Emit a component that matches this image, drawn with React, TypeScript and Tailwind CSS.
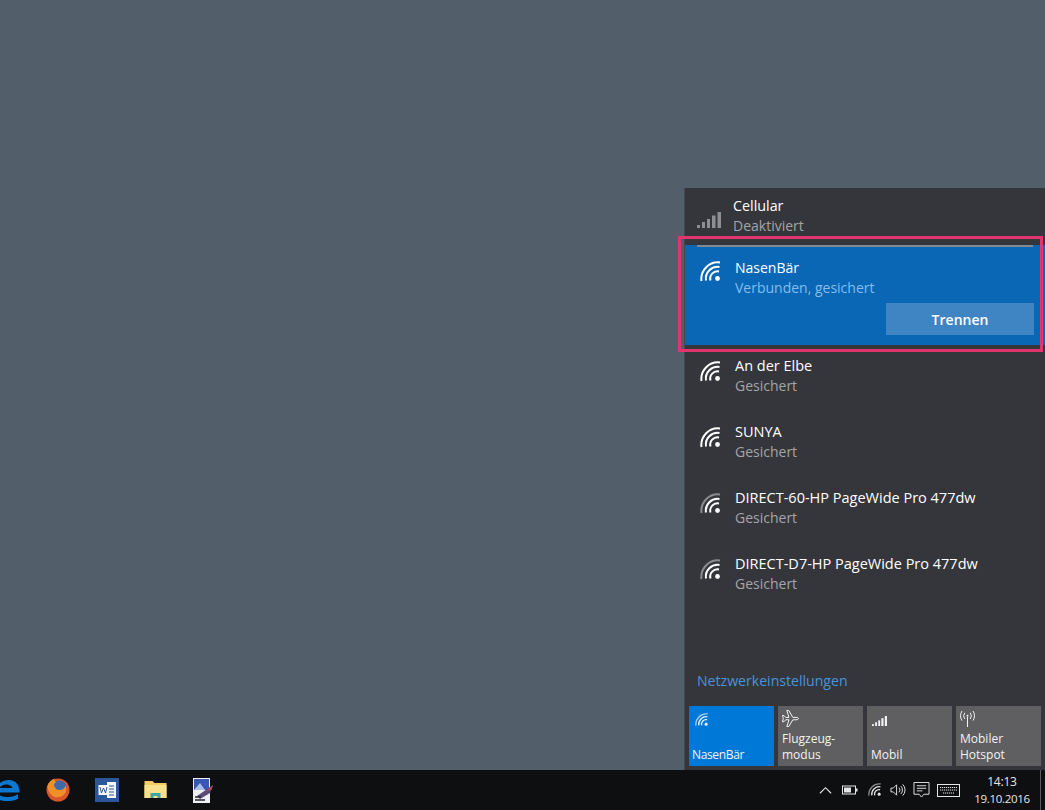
import React from "react";

const font = "font-['Open_Sans','Noto_Sans',sans-serif]";

// arcs share their centre with the dot, bottom right of the drawing
const WifiIcon = ({
  color = "#ffffff",
  outer,
  className = "w-[22px] h-[22px]",
}: {
  color?: string;
  outer?: string;
  className?: string;
}) => (
  <svg viewBox="0 0 22 22" fill="none" className={className}>
    <circle cx="17.5" cy="17.5" r="2.4" fill={color} />
    <path d="M10.5 19.5A7.2 7.2 0 0 1 19 10.5" stroke={color} strokeWidth="2" />
    <path d="M6 19.5A11.8 11.8 0 0 1 19.5 6" stroke={color} strokeWidth="2" />
    <path d="M1.5 20A16.5 16.5 0 0 1 20 1.5" stroke={outer ?? color} strokeWidth="2" />
  </svg>
);

const CellBars = ({ className, color }: { className: string; color: string }) => (
  <svg viewBox="0 0 24 16" className={className} fill={color}>
    <rect x="0" y="13" width="3" height="3" />
    <rect x="5" y="10" width="3" height="6" />
    <rect x="10" y="7" width="3" height="9" />
    <rect x="15" y="3.5" width="3.5" height="12.5" />
    <rect x="20.5" y="0" width="3.5" height="16" />
  </svg>
);

const PlaneIcon = () => (
  <svg viewBox="1 0 18 18" fill="none" stroke="#f2f2f2" strokeWidth="1" className="w-[18px] h-[18px]">
    <path d="M1.5 6.5l1.5 0 1.8 2 3.2-.1L5.8 1.5h2l4 6.900 3.200 0c1.600 0 2.500.6 2.500 1.200s-.9 1.200-2.500 1.200l-3.200 0-4 6.700h-2l2.200-6.700-3.200-.1-1.800 2-1.500 0 .8-3.100z" />
  </svg>
);

const HotspotIcon = () => (
  <svg viewBox="2 1 14 16" fill="none" stroke="#f2f2f2" strokeWidth="1" className="w-[15px] h-[16px] mt-[2px]">
    <path d="M9 7v10" />
    <circle cx="9" cy="5.8" r="1" fill="#f2f2f2" stroke="none" />
    <path d="M6.3 2.800a5 5 0 0 0 0 6.200M11.700 2.800a5 5 0 0 1 0 6.200" />
    <path d="M3.500 1a9 9 0 0 0 0 9.600M14.500 1a9 9 0 0 1 0 9.600" />
  </svg>
);

const networks = [
  { name: "An der Elbe", outer: undefined },
  { name: "SUNYA", outer: undefined },
  { name: "DIRECT-60-HP PageWide Pro 477dw", outer: "#8b8c8f" },
  { name: "DIRECT-D7-HP PageWide Pro 477dw", outer: "#8b8c8f" },
];

const NetworkRow = ({ name, outer }: { name: string; outer?: string }) => (
  <div className="h-[66px] flex pl-[15px] pt-[11px]">
    <div className="pt-[5px]">
      <WifiIcon outer={outer} />
    </div>
    <div className="ml-[13px] leading-[20px]">
      <div className="text-white text-[14.5px]">{name}</div>
      <div className="text-[#a4a5a8] text-[14px]">Gesichert</div>
    </div>
  </div>
);

const Tile = ({
  icon,
  active,
  children,
}: {
  icon: React.ReactNode;
  active?: boolean;
  children: React.ReactNode;
}) => (
  <div
    className={`h-[60px] flex flex-col justify-between pt-[3px] pb-[3px] text-[12px] leading-[16px] text-[#f2f2f2] ${
      active ? "bg-[#0078d7] pl-[3px]" : "bg-[#5f5f61] pl-[4px]"
    }`}
  >
    <div className="h-[18px]">{icon}</div>
    <div>{children}</div>
  </div>
);

const Firefox = () => (
  <svg viewBox="0 0 24 24" className="w-[24px] h-[24px]">
    <circle cx="12" cy="12" r="11.5" fill="#d9562a" />
    <circle cx="13.500" cy="9.500" r="7" fill="#3f6aa8" />
    <path d="M1.500 8c1-3.500 3.500-6 7-7.500-.7 1.800 0 3 2 3.500-1.500.7-2.500 1.700-2.500 3 .5 3 3 5.500 6.500 5 2.500-.3 4.500-2 5-4.500 1.500 3 1 7-2 9.500-3 2.700-8 3-11 .7C3 15 1.500 11.500 1.500 8z" fill="#f0902a" />
  </svg>
);

const WordIcon = () => (
  <svg viewBox="0 0 24 24" className="w-[24px] h-[24px]">
    <rect width="24" height="24" fill="#2b579a" />
    <rect x="12" y="4" width="9" height="16" fill="#f2f5fa" />
    <path d="M14 8h5M14 11h5M14 14h5M14 17h5" stroke="#2b579a" strokeWidth="1" />
    <rect x="3.500" y="7" width="10" height="10" fill="#f7f9fc" />
    <path d="M5 9l1.500 6 2-5 2 5 1.500-6" stroke="#2b579a" strokeWidth="1" fill="none" />
  </svg>
);

const FolderIcon = () => (
  <svg viewBox="0 0 22 20" className="w-[23px] h-[20px]">
    <path d="M0 1h8l2 2h12v15H0z" fill="#f3cd63" />
    <rect y="5" width="22" height="13" fill="#f8e08c" />
    <path d="M6 18v-5h10v5h-3v-2H9v2z" fill="#3fa6a6" />
  </svg>
);

const PaintIcon = () => (
  <svg viewBox="0 0 20 25" className="w-[20px] h-[25px]">
    <rect width="17" height="25" fill="#eef0f4" />
    <rect x="1" y="1" width="15" height="11" fill="#3a56b4" />
    <path d="M1 12l6-7 5 7z" fill="#a9bdec" />
    <path d="M4 18L20 7l-3 8-10 6z" fill="#5b4a78" />
    <path d="M13 13l7-6-1.500 5z" fill="#b04a58" />
    <path d="M2 19h6M2 22h10" stroke="#25252e" strokeWidth="1.500" />
  </svg>
);

const EdgeIcon = () => (
  <svg viewBox="0 0 20 21" className="w-[20px] h-[21px]">
    <path
      d="M0 12.500h19.500C19.800 5 15.500 0 9 0 5.500 0 2 1 0 3v4c1-1 3-2.500 6-2.500 3.500 0 6 1.700 6.300 3.500H0zM0 15.500V20c2.500 1 5 1 7.500 1 4 0 8-.8 10.500-2.300v-4.500c-2.500 1.600-6 2.800-9.500 2.800-3 0-6.500-.3-8.500-1.500z"
      fill="#0a78d1"
    />
  </svg>
);

const TrayIcons = () => (
  <div className="flex items-center text-[#e6e6e6]">
    <svg viewBox="0 0 14 8" fill="none" stroke="currentColor" strokeWidth="1.200" className="w-[13px] h-[8px]">
      <path d="M1 7.500l6-6 6 6" />
    </svg>
    <svg viewBox="0 0 16 10" fill="none" className="w-[16px] h-[10px] ml-[10px]">
      <rect x=".5" y="1" width="13" height="8" stroke="currentColor" />
      <rect x="2" y="2.500" width="7" height="5" fill="currentColor" />
      <rect x="14" y="3.500" width="1.500" height="3" fill="currentColor" />
    </svg>
    <WifiIcon color="#e6e6e6" outer="#8c8c8c" className="w-[14px] h-[14px] ml-[10px]" />
    <svg viewBox="0 0 17 14" fill="none" stroke="currentColor" strokeWidth="1" className="w-[16px] h-[14px] ml-[8px]">
      <path d="M1 5h2.500L7 1.500v11L3.500 9H1z" />
      <path d="M9.500 4.500a3.500 3.500 0 0 1 0 5M11.500 2.800a6 6 0 0 1 0 8.400M13.500 1a8.500 8.500 0 0 1 0 12" />
    </svg>
    <svg viewBox="0 0 17 17" fill="none" stroke="currentColor" strokeWidth="1" className="w-[17px] h-[16px] ml-[7px]">
      <path d="M.5 .5h16v12.500H11l-2.500 3-2.500-3H.5z" />
      <path d="M3.500 4h10M3.500 6.700h10M3.500 9.400h6" />
    </svg>
    <svg viewBox="0 0 23 13" fill="none" stroke="currentColor" strokeWidth="1" className="w-[23px] h-[13px] ml-[7px]">
      <rect x=".5" y=".5" width="22" height="12" />
      <path d="M3 3.500h17M3 6h17M6 9h11" strokeDasharray="1.200 .8" />
    </svg>
  </div>
);

export default function App() {
  return (
    <div className={`relative w-[1045px] h-[810px] overflow-hidden flex flex-col bg-[#535e6b] ${font}`}>
      <div className="flex-1 min-h-0 flex justify-end items-end">
        <div className="w-[361px] h-[582px] bg-[#35363b] flex flex-col border-l border-[#46484d]">
          <div className="h-[57px] flex pl-[12px] pt-[8px]">
            <div className="pt-[16px]">
              <CellBars className="w-[24px] h-[16px]" color="#8e8f92" />
            </div>
            <div className="ml-[12px] leading-[20px]">
              <div className="text-white text-[14.3px]">Cellular</div>
              <div className="text-[#a4a5a8] text-[14px]">Deaktiviert</div>
            </div>
          </div>
          <div className="h-[100px] bg-[#0a67b5] relative">
            <div className="h-[2px] mx-[12px] bg-[#7f8a94]" />
            <div className="flex pl-[15px] pt-[11px]">
              <div className="pt-[3px]">
                <WifiIcon />
              </div>
              <div className="ml-[13px] leading-[20px]">
                <div className="text-white text-[14px]">NasenBär</div>
                <div className="text-[#82bdf0] text-[14px]">Verbunden, gesichert</div>
              </div>
            </div>
            <div className="flex justify-end pr-[11px] mt-[5px]">
              <div className="w-[148px] h-[32px] bg-[#3f85c4] flex items-center justify-center text-white text-[14px] font-semibold">
                Trennen
              </div>
            </div>
          </div>
          {networks.map((n) => (
            <NetworkRow key={n.name} name={n.name} outer={n.outer} />
          ))}
          <div className="flex-1" />
          <div className="pl-[12px] pb-[15px] text-[14.1px] leading-[20px] text-[#4a93d6]">
            Netzwerkeinstellungen
          </div>
          <div className="grid grid-cols-4 gap-[4px] px-[4px] pb-[4px]">
            <Tile active icon={<WifiIcon className="w-[14px] h-[14px] ml-[3px] mt-[4px]" color="#e8f2fb" outer="#a9cdee" />}>
              <span className="tracking-[-0.35px]">NasenBär</span>
            </Tile>
            <Tile icon={<PlaneIcon />}>
              <div>Flugzeug-</div>
              <div>modus</div>
            </Tile>
            <Tile icon={<CellBars className="w-[15px] h-[10px] mt-[7px] ml-[1px]" color="#f2f2f2" />}>Mobil</Tile>
            <Tile icon={<HotspotIcon />}>
              <div>Mobiler</div>
              <div>Hotspot</div>
            </Tile>
          </div>
        </div>
      </div>
      <div className="h-[40px] bg-[#0e0f11] flex items-center">
        <EdgeIcon />
        <div className="ml-[26px]"><Firefox /></div>
        <div className="ml-[25px]"><WordIcon /></div>
        <div className="ml-[25px]"><FolderIcon /></div>
        <div className="ml-[26px]"><PaintIcon /></div>
        <div className="flex-1" />
        <TrayIcons />
        <div className="w-[70px] ml-[7px] text-center leading-[17px] text-[#e6e6e6]">
          <div className="text-[12px] tracking-[-0.2px]">14:13</div>
          <div className="text-[11.5px] tracking-[-0.3px]">19.10.2016</div>
        </div>
        <div className="w-[1px] h-[40px] bg-[#5a5b5e] mr-[4px] ml-[3px]" />
      </div>
      {/* red highlight drawn on the screenshot */}
      <div className="absolute left-[678px] top-[236px] w-[365px] h-[116px] border-[3px] border-[#e0356d] pointer-events-none" />
    </div>
  );
}
